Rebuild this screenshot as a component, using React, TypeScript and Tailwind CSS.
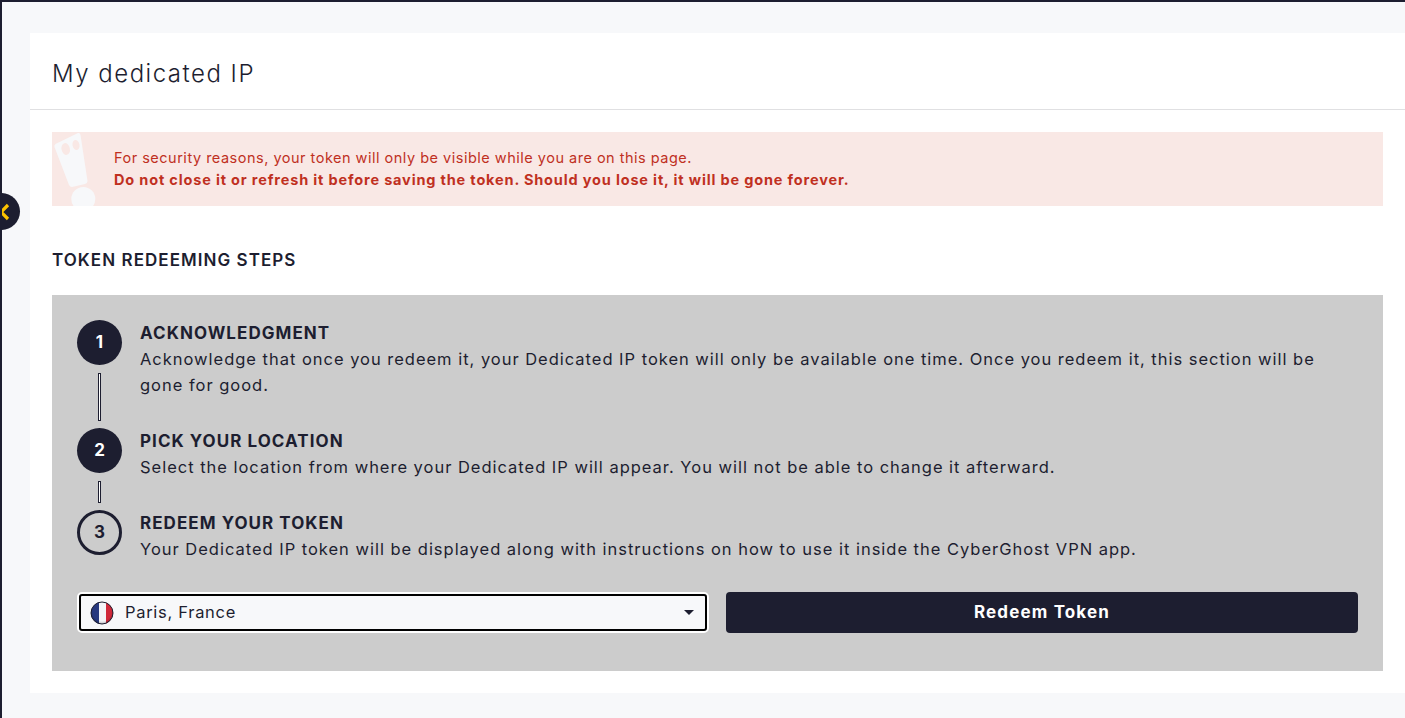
const font = "font-['Inter','Liberation_Sans',sans-serif]";

function GhostAlert() {
    return (
        <svg viewBox="0 0 44 74" className="absolute left-0 top-0 h-[74px] w-[44px]">
            <path d="M3.5 12 L26 1 Q28 0.5 28.5 3 L35.5 49 Q35.5 51.5 33 52 L20 55 Q18 55 17 53 L2.5 15 Q2 13 3.5 12 Z" fill="#f7f8fa" />
            <ellipse cx="13.7" cy="17" rx="4.2" ry="6" fill="#f9e8e5" transform="rotate(-12 13.7 17)" />
            <ellipse cx="24" cy="13" rx="3.5" ry="5" fill="#f9e8e5" transform="rotate(-12 24 13)" />
            <circle cx="31.3" cy="67" r="12" fill="#f7f8fa" />
        </svg>
    );
}

function FranceFlag() {
    return (
        <svg viewBox="0 0 24 24" className="h-[24px] w-[24px] shrink-0">
            <defs>
                <clipPath id="flag-clip">
                    <circle cx="12" cy="12" r="11" />
                </clipPath>
                <radialGradient id="flag-shade" cx="50%" cy="45%" r="55%">
                    <stop offset="70%" stopColor="#000" stopOpacity="0" />
                    <stop offset="100%" stopColor="#000" stopOpacity="0.35" />
                </radialGradient>
            </defs>
            <g clipPath="url(#flag-clip)">
                <rect x="0" y="0" width="9" height="24" fill="#27397f" />
                <rect x="9" y="0" width="7" height="24" fill="#f4f4f8" />
                <rect x="16" y="0" width="8" height="24" fill="#d0283a" />
                <rect x="0" y="0" width="24" height="24" fill="url(#flag-shade)" />
            </g>
            <circle cx="12" cy="12" r="11" fill="none" stroke="#1d1e30" strokeWidth="1" />
        </svg>
    );
}

function StepBadge({ n, outline }: { n: number; outline?: boolean }) {
    return (
        <div
            className={
                outline
                    ? 'flex h-[45px] w-[45px] shrink-0 items-center justify-center rounded-full border-[3px] border-[#1d1e30] text-[17px] font-bold text-[#1d1e30]'
                    : 'flex h-[45px] w-[45px] shrink-0 items-center justify-center rounded-full bg-[#1d1e30] text-[17px] font-bold text-white'
            }
        >
            {n}
        </div>
    );
}

function Step({ n, title, text, outline, last }: { n: number; title: string; text: string; outline?: boolean; last?: boolean }) {
    return (
        <div className="flex gap-[18px]">
            <div className="flex w-[45px] shrink-0 flex-col items-center">
                <StepBadge n={n} outline={outline} />
                {!last && <div className="mb-[7px] mt-[8px] w-[3px] flex-1 border border-[#1d1e30] bg-white" />}
            </div>
            <div className="max-w-[1190px] pb-[30px] text-[#1d1e30]">
                <h3 className="text-[17px] font-bold leading-[26px] tracking-[1.05px]">{title}</h3>
                <p className="text-[16.5px] leading-[26px] tracking-[0.98px]">{text}</p>
            </div>
        </div>
    );
}

export default function App() {
    return (
        <div className={`relative h-[718px] w-[1405px] overflow-hidden border-t-2 border-l-2 border-[#1d1e30] bg-[#f7f8fa] pl-[28px] pt-[31px] ${font}`}>
            <div className="absolute left-[-25px] top-[191px] flex h-[37px] w-[43px] items-center justify-end rounded-full bg-[#1d1e30] pr-[10px]">
                <svg viewBox="0 0 12 18" className="h-[18px] w-[12px]" fill="none" stroke="#fdc300" strokeWidth="3.2">
                    <path d="M10 2 L3 9 L10 16" />
                </svg>
            </div>

            <div className="h-[660px] bg-white">
                <div className="flex h-[77px] items-center border-b border-[#e0e0e2] pl-[22px] pt-[6px]">
                    <h1 className="text-[24px] font-light tracking-[1.5px] text-[#1d1e30]">My dedicated IP</h1>
                </div>

                <div className="px-[22px] pt-[22px]">
                    <div className="relative flex h-[74px] flex-col justify-center bg-[#f9e8e5] pl-[62px] text-[14.5px] leading-[22px] text-[#c0301f]">
                        <GhostAlert />
                        <p className="tracking-[0.5px]">For security reasons, your token will only be visible while you are on this page.</p>
                        <p className="font-bold tracking-[0.84px]">Do not close it or refresh it before saving the token. Should you lose it, it will be gone forever.</p>
                    </div>

                    <h2 className="mt-[43px] text-[17px] font-semibold leading-[22px] tracking-[1.05px] text-[#1d1e30]">TOKEN REDEEMING STEPS</h2>

                    <div className="mt-[24px] h-[376px] bg-[#cccccc] px-[25px] pt-[25px]">
                        <Step
                            n={1}
                            title="ACKNOWLEDGMENT"
                            text="Acknowledge that once you redeem it, your Dedicated IP token will only be available one time. Once you redeem it, this section will be gone for good."
                        />
                        <Step
                            n={2}
                            title="PICK YOUR LOCATION"
                            text="Select the location from where your Dedicated IP will appear. You will not be able to change it afterward."
                        />
                        <Step
                            n={3}
                            outline
                            last
                            title="REDEEM YOUR TOKEN"
                            text="Your Dedicated IP token will be displayed along with instructions on how to use it inside the CyberGhost VPN app."
                        />

                        <div className="flex items-center gap-[17px]">
                            <div className="flex h-[41px] w-[632px] items-center rounded-[5px] border-2 border-white bg-[#f7f8fa] pl-[11px] pr-[13px] outline-2 -outline-offset-4 outline-black">
                                <FranceFlag />
                                <span className="ml-[11px] text-[16.5px] tracking-[0.7px] text-[#1d1e30]">Paris, France</span>
                                <span className="ml-auto h-0 w-0 border-x-[5px] border-t-[5px] border-x-transparent border-t-[#1d1e30]" />
                            </div>
                            <button className="h-[41px] flex-1 rounded-[4px] bg-[#1d1e30] text-[17px] font-bold tracking-[1.15px] text-white">Redeem Token</button>
                        </div>
                    </div>
                </div>
            </div>
        </div>
    );
}
